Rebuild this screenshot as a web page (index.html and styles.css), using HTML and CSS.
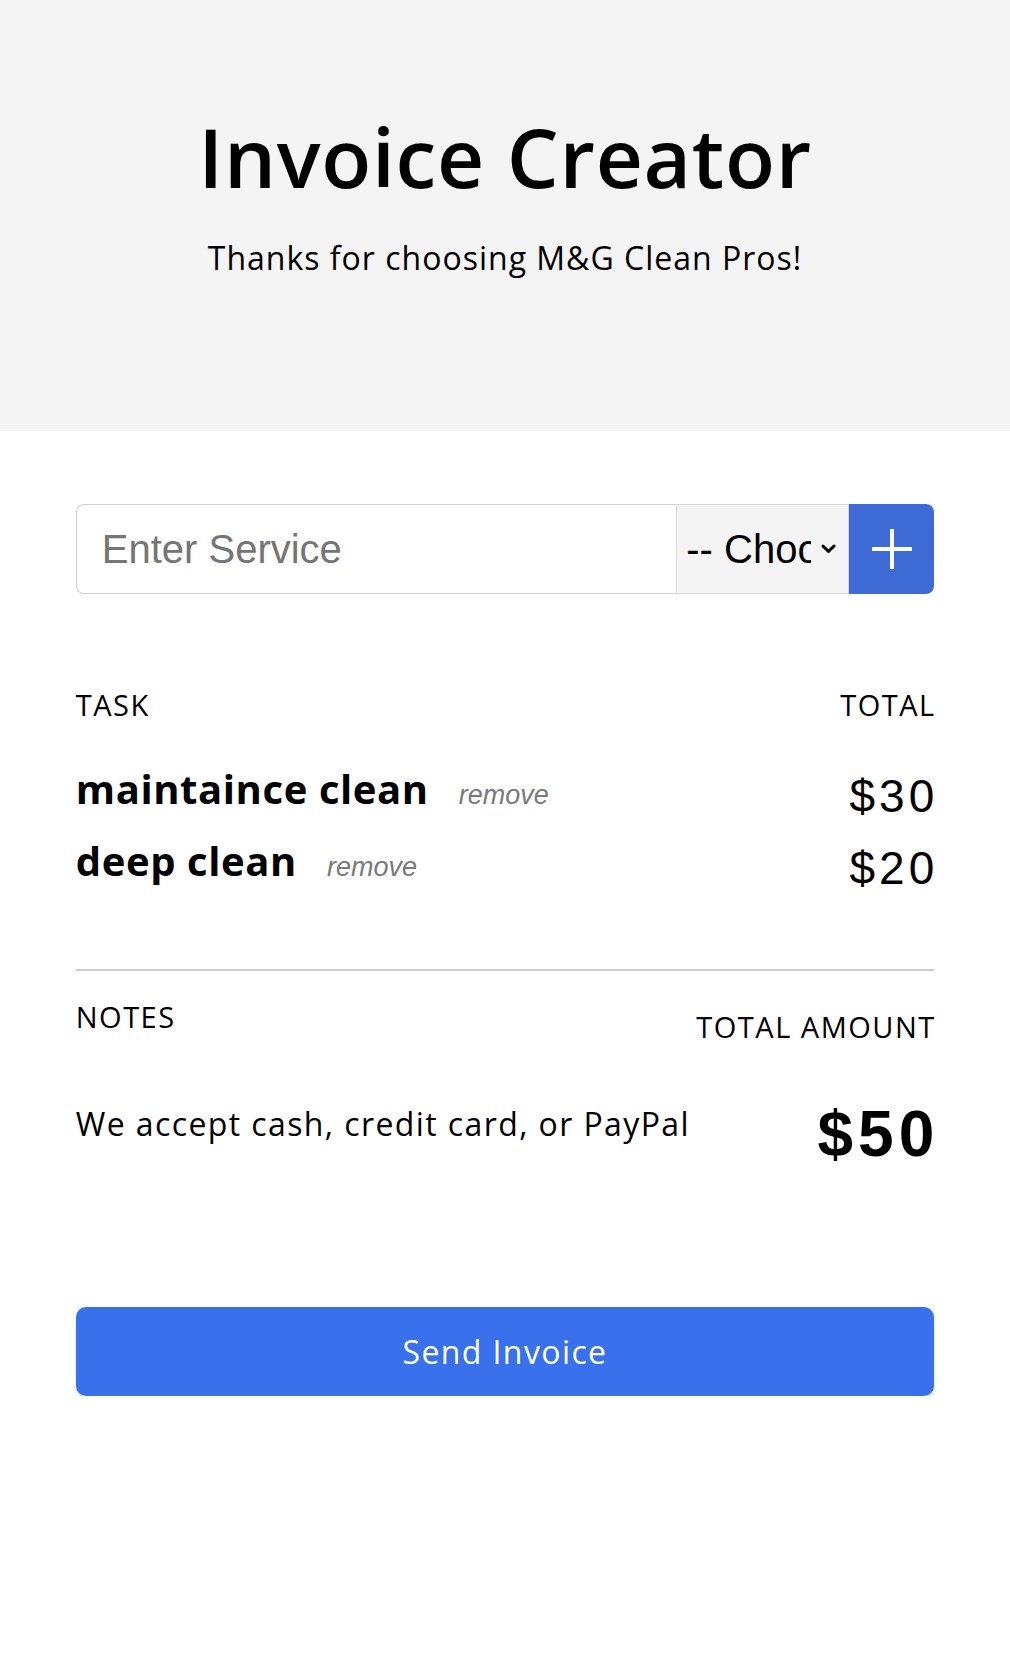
FILE: index.html
```html
<!DOCTYPE html>
<html lang="en">
<head>
<meta charset="utf-8">
<title>Invoice Creator</title>
<link rel="stylesheet" href="styles.css">
</head>
<body>
<header class="hero">
  <h1 class="hero-title">Invoice Creator</h1>
  <p class="hero-sub">Thanks for choosing M&amp;G Clean Pros!</p>
</header>
<main class="invoice">
  <form class="entry">
    <input class="entry-input" type="text" placeholder="Enter Service">
    <div class="select-wrap">
      <select class="entry-select">
        <option>-- Choose --</option>
        <option>$10</option>
        <option>$20</option>
        <option>$30</option>
      </select>
      <svg class="select-chevron" width="15" height="10" viewBox="0 0 15 10"><path d="M2 2l5.5 5.5L13 2" stroke="#000" stroke-width="3" fill="none" stroke-linecap="round" stroke-linejoin="round"/></svg>
    </div>
    <button class="entry-add" type="button" aria-label="Add">
      <svg width="40" height="40" viewBox="0 0 40 40"><path d="M20 1v38M1 20h38" stroke="#fff" stroke-width="4" stroke-linecap="round" fill="none"/></svg>
    </button>
  </form>

  <div class="head-row">
    <span class="label">TASK</span>
    <span class="label">TOTAL</span>
  </div>
  <div class="item">
    <div class="item-name"><span class="task">maintaince clean</span><span class="remove">remove</span></div>
    <span class="price">$30</span>
  </div>
  <div class="item">
    <div class="item-name"><span class="task">deep clean</span><span class="remove">remove</span></div>
    <span class="price">$20</span>
  </div>

  <hr class="divider">

  <div class="summary">
    <div class="notes">
      <div class="label">NOTES</div>
      <p class="note-text">We accept cash, credit card, or PayPal</p>
    </div>
    <div class="amount">
      <div class="label">TOTAL AMOUNT</div>
      <div class="grand">$50</div>
    </div>
  </div>

  <button class="send" type="button">Send Invoice</button>
</main>
</body>
</html>
```
FILE: styles.css
```css
* { box-sizing: border-box; }
body {
  margin: 0;
  font-family: "Open Sans", "DejaVu Sans", sans-serif;
  color: #000;
  background: #fff;
}
.hero {
  background: #f4f4f4;
  height: 431px;
  padding-top: 107px;
  text-align: center;
}
.hero-title {
  margin: 0;
  font-size: 82px;
  line-height: 1.2;
  font-weight: 600;
  letter-spacing: 0.7px;
}
.hero-sub {
  margin: 34px 0 0;
  font-size: 32px;
  line-height: 1.2;
  font-weight: 400;
  letter-spacing: 1px;
}
.invoice {
  width: 85%;
  margin: 0 auto;
}
.entry {
  display: flex;
  height: 90px;
  margin: 73px 0 0;
}
.entry-input {
  flex: 1;
  min-width: 0;
  border: 1px solid #d0d0d0;
  border-right: none;
  border-radius: 8px 0 0 8px;
  padding: 0 25px;
  font-family: "Liberation Sans", Arial, sans-serif;
  font-size: 40px;
  color: #000;
  outline: none;
}
.entry-input::placeholder { color: #757575; }
.select-wrap {
  position: relative;
  width: 173px;
  display: flex;
}
.entry-select {
  appearance: none;
  -webkit-appearance: none;
  width: 100%;
  border: 1px solid #d6d6d6;
  border-radius: 0;
  background: #f4f4f4;
  font-family: "Liberation Sans", Arial, sans-serif;
  font-size: 40px;
  color: #000;
  padding: 0 37px 0 9px;
  outline: none;
}
.select-chevron {
  position: absolute;
  right: 13px;
  top: 40px;
  pointer-events: none;
}
.entry-add {
  width: 85px;
  border: none;
  border-radius: 0 8px 8px 0;
  background: #3d6ad4;
  display: flex;
  align-items: center;
  justify-content: center;
  padding: 0;
}
.head-row {
  display: flex;
  justify-content: space-between;
  margin-top: 94px;
  margin-bottom: 30px;
}
.label {
  font-size: 29px;
  line-height: 1.2;
  font-weight: 400;
  letter-spacing: 1.5px;
}
.head-row .label:last-child,
.amount .label { margin-right: -1.5px; }
.item {
  display: flex;
  justify-content: space-between;
  align-items: flex-start;
  height: 72px;
}
.item-name {
  display: flex;
  align-items: baseline;
  gap: 30px;
  line-height: 72px;
}
.task {
  font-size: 40px;
  font-weight: 700;
  letter-spacing: 0.6px;
}
.remove {
  font-family: "Liberation Sans", Arial, sans-serif;
  font-style: italic;
  font-size: 27px;
  color: #7a7a7a;
}
.price {
  font-family: "Liberation Sans", Arial, sans-serif;
  font-size: 46px;
  line-height: 72px;
  padding-top: 7px;
  letter-spacing: 4px;
  margin-right: -4px;
}
.divider {
  margin: 72px 0 0;
  border: none;
  height: 2px;
  background: #c9c9e0;
}
.summary {
  display: flex;
  justify-content: space-between;
  align-items: flex-start;
  margin-top: 29px;
}
.note-text {
  margin: 70px 0 0;
  font-size: 32px;
  line-height: 1.2;
  letter-spacing: 1.4px;
}
.amount {
  margin-top: 10px;
  display: flex;
  flex-direction: column;
  align-items: flex-end;
}
.grand {
  margin-top: 57px;
  font-family: "Liberation Sans", Arial, sans-serif;
  font-weight: 700;
  font-size: 64px;
  line-height: 1;
  letter-spacing: 5px;
  margin-right: -5px;
}
.send {
  display: block;
  width: 100%;
  height: 89px;
  margin-top: 141px;
  border: none;
  border-radius: 10px;
  background: #3871eb;
  color: #fff;
  font-family: "Open Sans", "DejaVu Sans", sans-serif;
  font-size: 32px;
  letter-spacing: 1.4px;
  box-shadow: 0 2px 4px rgba(0,0,0,0.15);
}
```
